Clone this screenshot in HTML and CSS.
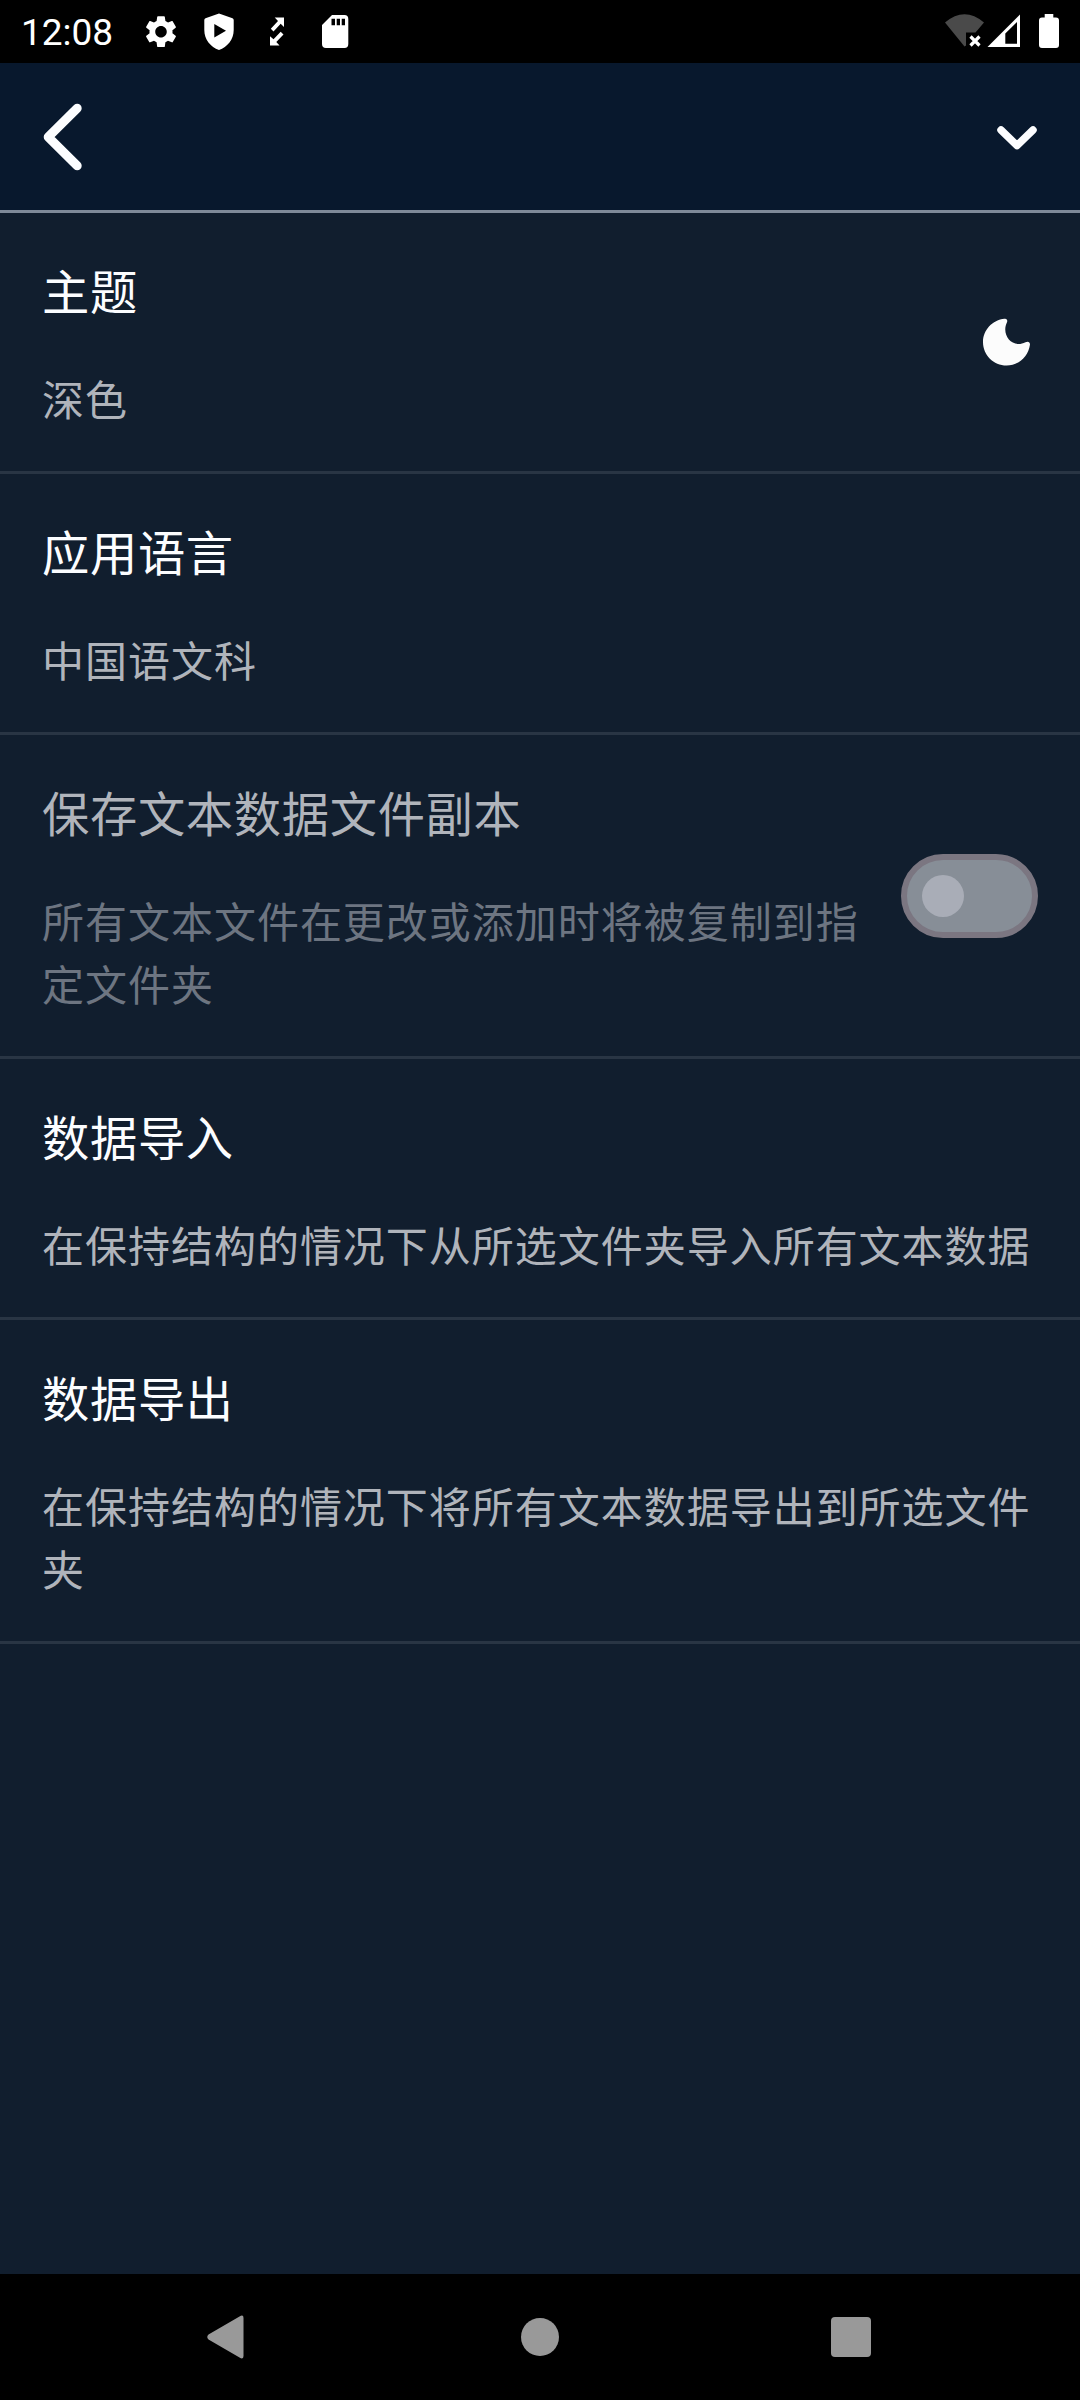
FILE: index.html
```html
<!DOCTYPE html>
<html lang="zh-CN">
<head>
<meta charset="utf-8">
<title>设置</title>
<link rel="stylesheet" href="styles.css">
</head>
<body>
<div class="screen">
  <div class="status">
    <span class="clock">12:08</span>
    <svg class="status-icons" width="210" height="63" viewBox="140 0 210 63" fill="#fff">
      <path transform="translate(141.8 12.5) scale(1.6)" d="M19.14 12.94c.04-.3.06-.61.06-.94 0-.32-.02-.64-.07-.94l2.03-1.58c.18-.14.23-.41.12-.61l-1.92-3.32c-.12-.22-.37-.29-.59-.22l-2.39.96c-.5-.38-1.03-.7-1.62-.94l-.36-2.54c-.04-.24-.24-.41-.48-.41h-3.84c-.24 0-.43.17-.47.41l-.36 2.54c-.59.24-1.13.57-1.62.94l-2.39-.96c-.22-.08-.47 0-.59.22L2.74 8.87c-.12.21-.08.47.12.61l2.03 1.58c-.05.3-.09.63-.09.94s.02.64.07.94l-2.03 1.58c-.18.14-.23.41-.12.61l1.92 3.32c.12.22.37.29.59.22l2.39-.96c.5.38 1.03.7 1.62.94l.36 2.54c.05.24.24.41.48.41h3.84c.24 0 .44-.17.47-.41l.36-2.54c.59-.24 1.13-.56 1.62-.94l2.39.96c.22.08.47 0 .59-.22l1.92-3.32c.12-.22.07-.47-.12-.61l-2.01-1.58zM12 15.6c-1.98 0-3.6-1.62-3.6-3.6s1.62-3.6 3.6-3.6 3.6 1.62 3.6 3.6-1.62 3.6-3.6 3.6z"/>
      <path fill-rule="evenodd" d="M219 13.5 205.5 18.3Q204.3 18.8 204.3 20V30C204.3 39.5 210.5 47 219 50C227.5 47 233.7 39.500 233.700 30V20Q233.700 18.800 232.500 18.300ZM214.300 24V37.500L226 30.700Z"/>
      <path d="M274.700 17.500H284V27L280.700 23.700L273.500 31.500L270.800 28.700L278 20.900ZM280.700 31.800 283.500 34.600 276.300 42 279.500 45.500H270V36.200L273.500 39.300Z"/>
      <path fill-rule="evenodd" d="M332 15H344.500Q348.300 15 348.300 19V44Q348.300 48 344.500 48H326Q322 48 322 44V25ZM331.500 18.700V25.300H335V18.700ZM336.700 18.700V25.300H340V18.700ZM341.700 18.700V25.300H345V18.700Z"/>
    </svg>
    <svg class="status-system" width="135" height="63" viewBox="945 0 135 63" fill="#fff">
      <path fill="#4a4a4a" d="M945 22.500Q964.500 6 984 22.500L975.500 32.500H966V45.500L964.500 46.500Z"/>
      <path d="M970.500 36.500 979.500 45.500M979.500 36.500 970.500 45.500" stroke="#fff" stroke-width="3.200"/>
      <path fill-rule="evenodd" d="M987.500 47 1020 14.500V47ZM1005.300 33.500V43.700H1017V22Z"/>
      <path d="M1044.700 14H1053.300V17.500H1056Q1059 17.500 1059 20.500V45Q1059 48 1056 48H1042Q1039 48 1039 45V20.500Q1039 17.500 1042 17.500H1044.700Z"/>
    </svg>
  </div>

  <header class="toolbar">
    <svg width="40" height="68" viewBox="0 0 40 68"><path d="M34.200 5.200 5.200 34 34.200 62.800"/></svg>
    <svg width="40" height="26" viewBox="0 0 40 26"><path class="chevron" d="M4 6 20 21.500 36 6"/></svg>
  </header>

  <main class="settings">
    <section class="row">
      <div class="text"><h2>主题</h2><p>深色</p></div>
      <svg class="moon" width="48" height="48" viewBox="0 0 48 48"><path d="M21.500 .8C24 .4 24.800 2.500 23.900 4.500C18 16.500 29 31 42.500 24.200C45 22.900 47.400 23.800 46.900 27C45.200 38.800 35.300 47.500 23.600 47.500C10.500 47.500 0 37 0 24C0 12 9.500 2 21.500 .8Z"/></svg>
    </section>
    <section class="row">
      <div class="text"><h2>应用语言</h2><p>中国语文科</p></div>
    </section>
    <section class="row disabled">
      <div class="text"><h2>保存文本数据文件副本</h2><p>所有文本文件在更改或添加时将被复制到指定文件夹</p></div>
      <div class="switch"><div class="thumb"></div></div>
    </section>
    <section class="row">
      <div class="text"><h2>数据导入</h2><p>在保持结构的情况下从所选文件夹导入所有文本数据</p></div>
    </section>
    <section class="row">
      <div class="text"><h2>数据导出</h2><p>在保持结构的情况下将所有文本数据导出到所选文件夹</p></div>
    </section>
  </main>

  <nav class="navbar">
    <svg width="40" height="62" viewBox="0 0 40 62"><path d="M32.500 10.500Q36.500 8 36.500 12V50Q36.500 54 32.500 51.500L1.500 33.500Q-1 31 1.500 28.500Z"/></svg>
    <svg width="40" height="40" viewBox="0 0 40 40"><circle cx="21" cy="20" r="19"/></svg>
    <svg width="40" height="40" viewBox="0 0 40 40"><rect width="40" height="40" rx="4"/></svg>
  </nav>
</div>
</body>
</html>
```
FILE: styles.css
```css
* { box-sizing: border-box; }
body { margin: 0; background: #111e2e; }
h2, p { margin: 0; font-weight: 400; }
svg { display: block; flex: none; }

.screen {
  display: flex;
  flex-direction: column;
  width: 1080px;
  height: 2400px;
  background: #111e2e;
  font-family: "Noto Sans CJK SC", sans-serif;
}

.status {
  display: flex;
  height: 63px;
  padding-left: 21px;
  background: #000;
}
.clock {
  width: 119px;
  font: 37px/66px Roboto, sans-serif;
  color: #fff;
}
.status-system { margin-left: auto; }

.toolbar {
  display: flex;
  align-items: center;
  justify-content: space-between;
  height: 150px;
  padding: 0 43px;
  background: #08182d;
  border-bottom: 3px solid #7f8a99;
}
.toolbar path {
  fill: none;
  stroke: #fcfdff;
  stroke-width: 9;
  stroke-linecap: round;
  stroke-linejoin: round;
}
.toolbar .chevron { stroke-width: 7.500; }

.settings { flex: 1; }
.row {
  display: flex;
  align-items: center;
  justify-content: space-between;
  gap: 42px;
  padding: 42px;
  border-bottom: 3px solid #293544;
}
.text {
  display: flex;
  flex: 1;
  flex-direction: column;
  gap: 41px;
}
.text h2 {
  font-size: 47.250px;
  line-height: 70px;
  letter-spacing: .7px;
  color: #fcfdff;
}
.text p {
  font-size: 42px;
  line-height: 63px;
  letter-spacing: .980px;
  color: #b0b4bb;
}
.disabled h2 { color: #b0b4bb; }
.disabled p { color: #6d7581; }
.moon { margin-right: 7px; fill: #fcfcfc; }

.switch {
  display: flex;
  align-items: center;
  width: 137px;
  height: 84px;
  padding-left: 15px;
  background: #878e97;
  border: 6px solid #7b7681;
  border-radius: 42px;
}
.thumb {
  width: 42px;
  height: 42px;
  background: #a9adb7;
  border-radius: 50%;
}

.navbar {
  display: flex;
  align-items: center;
  justify-content: space-between;
  height: 126px;
  padding: 0 209px 0 207px;
  background: #000;
  fill: #999;
}
```
